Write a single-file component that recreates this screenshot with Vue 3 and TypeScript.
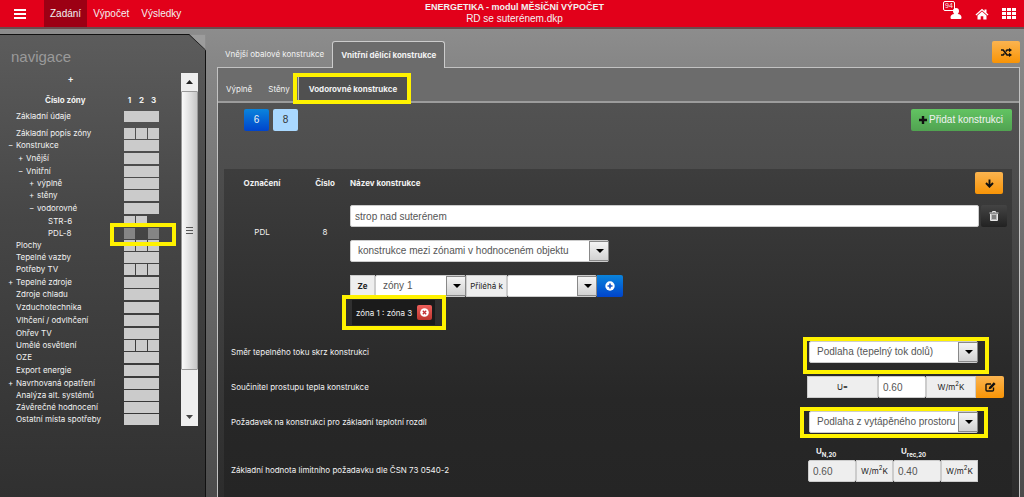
<script setup lang="ts">
import { ref } from 'vue'

interface NavRow {
  label: string
  level: number
  toggle?: string
  cells: string
  size?: string
}

// cells: "bar" is one bar across all zones; otherwise one letter per zone
// (o = filled, d = dimmed, - = none)
const rows: NavRow[] = [
  { label: 'Základní údaje', level: 0, cells: 'bar', size: 'apart' },
  { label: 'Základní popis zóny', level: 0, cells: 'ooo' },
  { label: 'Konstrukce', level: 0, toggle: '−', cells: 'bar', size: 'tall' },
  { label: 'Vnější', level: 1, toggle: '+', cells: 'bar', size: 'tall' },
  { label: 'Vnitřní', level: 1, toggle: '−', cells: 'bar' },
  { label: 'výplně', level: 2, toggle: '+', cells: 'bar' },
  { label: 'stěny', level: 2, toggle: '+', cells: 'bar', size: 'tall' },
  { label: 'vodorovné', level: 2, toggle: '−', cells: 'bar', size: 'tall' },
  { label: 'STR-6', level: 3, cells: 'oo-' },
  { label: 'PDL-8', level: 3, cells: 'd-d' },
  { label: 'Plochy', level: 0, cells: 'ooo' },
  { label: 'Tepelné vazby', level: 0, cells: 'bar' },
  { label: 'Potřeby TV', level: 0, cells: 'ooo', size: 'tall' },
  { label: 'Tepelné zdroje', level: 0, toggle: '+', cells: 'bar' },
  { label: 'Zdroje chladu', level: 0, cells: 'bar', size: 'tall' },
  { label: 'Vzduchotechnika', level: 0, cells: 'bar', size: 'tall' },
  { label: 'Vlhčení / odvlhčení', level: 0, cells: 'bar', size: 'tall' },
  { label: 'Ohřev TV', level: 0, cells: 'bar' },
  { label: 'Umělé osvětlení', level: 0, cells: 'ooo' },
  { label: 'OZE', level: 0, cells: 'bar', size: 'tall' },
  { label: 'Export energie', level: 0, cells: 'bar', size: 'tall' },
  { label: 'Navrhovaná opatření', level: 0, toggle: '+', cells: 'bar' },
  { label: 'Analýza alt. systémů', level: 0, cells: 'bar' },
  { label: 'Závěrečné hodnocení', level: 0, cells: 'bar' },
  { label: 'Ostatní místa spotřeby', level: 0, cells: 'bar' },
]

const name = ref('strop nad suterénem')
const uValue = ref('0.60')
</script>

<template>
  <div class="app">
    <header class="topbar">
      <button class="burger" type="button" aria-label="Menu"><i></i><i></i><i></i></button>
      <nav class="mainmenu">
        <a href="#" class="on">Zadání</a>
        <a href="#">Výpočet</a>
        <a href="#">Výsledky</a>
      </nav>
      <div class="title">
        <strong>ENERGETIKA - modul MĚSÍČNÍ VÝPOČET</strong>
        <span>RD se suterénem.dkp</span>
      </div>
      <div class="tools">
        <button type="button" class="user" aria-label="Uživatel">
          <svg width="12" height="11" viewBox="0 0 12 11"><path d="M6 0a3 3 0 0 1 3 3c0 1.300-.6 2.400-1.300 3C10 6.300 11.500 7.300 11.500 9.500c0 1-.6 1.500-1.500 1.500H2C1 11 .5 10.500.5 9.500.5 7.300 2 6.300 4.300 6 3.600 5.400 3 4.300 3 3a3 3 0 0 1 3-3z" fill="#fff" /></svg>
          <span class="count">94</span>
        </button>
        <button type="button" aria-label="Domů">
          <svg width="14" height="12" viewBox="0 0 14 12"><path d="M7 .8 9.500 3V1.500h2v3.200L13.500 6.500l-.8.900L7 2.500 1.300 7.400.5 6.500z" fill="#fff" /><path d="M7 3.600 11.500 7.500V11.500H8.300V8.300H5.700v3.200H2.500v-4z" fill="#fff" /></svg>
        </button>
        <button type="button" aria-label="Aplikace">
          <svg width="14" height="11" viewBox="0 0 14 11" fill="#fff"><path d="M0 0h4v3H0zM5 0h4v3H5zM10 0h4v3h-4zM0 4h4v3H0zM5 4h4v3H5zM10 4h4v3h-4zM0 8h4v3H0zM5 8h4v3H5zM10 8h4v3h-4z" /></svg>
        </button>
      </div>
    </header>

    <div class="body">
      <aside class="side">
        <svg class="fold" width="17" height="17" viewBox="0 0 17 17"><path d="M0 0h17v17z" fill="#8e8e8e" /><path d="M2 1l14 14V1z" fill="#9c9c9c" /><path d="M0 0.500 16.500 16V17" fill="none" stroke="#222" /></svg>
        <h2>navigace</h2>
        <div class="sidebody">
          <div class="tree">
            <button type="button" class="expand">+</button>
            <div class="treehead">
              <strong class="zone">Číslo zóny</strong>
              <span class="nums"><b>1</b><b>2</b><b>3</b></span>
            </div>
            <div v-for="r in rows" :key="r.label" class="row" :class="[r.size, 'lv' + r.level]">
              <span class="tog">{{ r.toggle }}</span>
              <a href="#" class="lab">{{ r.label }}</a>
              <span class="cells">
                <i v-if="r.cells === 'bar'" class="wide"></i>
                <template v-else>
                  <i v-for="(c, n) in r.cells.split('')" :key="n" :class="{ dim: c === 'd', none: c === '-' }"></i>
                </template>
                <span v-if="r.label === 'PDL-8'" class="mark"></span>
              </span>
            </div>
          </div>
          <div class="scroll">
            <button type="button" aria-label="Nahoru"><svg width="7" height="4" viewBox="0 0 7 4"><path d="M0 4 3.500 0 7 4z" fill="#222" /></svg></button>
            <div class="thumb"><i></i><i></i><i></i></div>
            <button type="button" class="down" aria-label="Dolů"><svg width="7" height="4" viewBox="0 0 7 4"><path d="M0 0h7L3.500 4z" fill="#444" /></svg></button>
          </div>
        </div>
      </aside>

      <main class="main">
        <div class="tabs">
          <a href="#">Vnější obalové konstrukce</a>
          <a href="#" class="on">Vnitřní dělící konstrukce</a>
          <button type="button" class="btn orange shuffle" aria-label="Zamíchat">
            <svg width="11" height="9" viewBox="0 0 11 9"><path d="M0 2h2.200L6 7h2.500M0 7h2.200L3.400 5.500M4.800 3.500 6 2h2.500" fill="none" stroke="#111" stroke-width="1.500" /><path d="M8 0l3 2-3 2.200zM8 4.800l3 2.200-3 2z" fill="#111" /></svg>
          </button>
        </div>
        <section class="panel">
          <div class="subtabs">
            <a href="#">Výplně</a>
            <a href="#">Stěny</a>
            <a href="#" class="on">Vodorovné konstrukce<span class="mark"></span></a>
          </div>
          <div class="inner">
            <div class="bar">
              <button type="button" class="btn blue num">6</button>
              <button type="button" class="btn pale num">8</button>
              <button type="button" class="btn green add">
                <svg width="8" height="8" viewBox="0 0 8 8"><path d="M2.800 0h2.400v2.800H8v2.400H5.200V8H2.800V5.200H0V2.800h2.800z" fill="#111" /></svg>
                Přidat konstrukci
              </button>
            </div>

            <div class="card">
              <div class="entry">
                <strong class="mid">Označení</strong>
                <strong class="mid">Číslo</strong>
                <div class="headrow">
                  <label for="name"><strong>Název konstrukce</strong></label>
                  <button type="button" class="btn orange" aria-label="Dolů">
                    <svg width="9" height="9" viewBox="0 0 9 9"><path d="M4.500.5V7M1 4l3.500 3.700L8 4" fill="none" stroke="#111" stroke-width="1.900" /></svg>
                  </button>
                </div>
                <span class="mid code">PDL</span>
                <span class="mid code">8</span>
                <div class="fields">
                  <div class="namerow">
                    <input id="name" v-model="name" type="text" class="box" />
                    <button type="button" class="btn dark" aria-label="Smazat">
                      <svg width="10" height="10" viewBox="0 0 10 10"><path d="M3.500 1.500V.500h3v1M.5 2h9M1.500 3v6.500h7V3" fill="none" stroke="#e8e8e8" /><path d="M2 3h6v6H2z" fill="#bbb" /><path d="M3 5h4M3 7h4" stroke="#444" /></svg>
                    </button>
                  </div>
                  <span class="sel kind">
                    <select aria-label="Druh konstrukce"><option>konstrukce mezi zónami v hodnoceném objektu</option></select>
                  </span>
                  <div class="zones">
                    <label for="from" class="addon bold">Ze</label>
                    <span class="sel from"><select id="from"><option>zóny 1</option></select></span>
                    <label for="to" class="addon adj">Přiléhá k</label>
                    <span class="sel to"><select id="to"><option></option></select></span>
                    <button type="button" class="btn blue go" aria-label="Přidat">
                      <svg width="10" height="10" viewBox="0 0 10 10"><circle cx="5" cy="5" r="4.700" fill="#fff" /><path d="M5 2.500v5M2.500 5h5" stroke="#1355c8" stroke-width="1.600" /></svg>
                    </button>
                  </div>
                  <div class="chip">
                    <span>zóna 1 : zóna 3</span>
                    <button type="button" class="btn red" aria-label="Odebrat">
                      <svg width="9" height="9" viewBox="0 0 9 9"><circle cx="4.500" cy="4.500" r="4.300" fill="#fff" /><path d="M2.800 2.800l3.400 3.400M6.200 2.800 2.800 6.200" stroke="#c32f34" stroke-width="1.300" /></svg>
                    </button>
                    <span class="mark"></span>
                  </div>
                </div>
              </div>

              <div class="line">
                <label for="dir">Směr tepelného toku skrz konstrukci</label>
                <span class="sel val"><select id="dir"><option>Podlaha (tepelný tok dolů)</option></select><span class="mark m1"></span></span>
              </div>
              <div class="line">
                <label for="u">Součinitel prostupu tepla konstrukce</label>
                <div class="group">
                  <span class="addon ueq">U=</span>
                  <input id="u" v-model="uValue" type="text" class="box" />
                  <span class="addon unit">W/m<sup>2</sup>K</span>
                  <button type="button" class="btn orange edit" aria-label="Upravit">
                    <svg width="11" height="10" viewBox="0 0 11 10"><path d="M8.500 5.500V8a1 1 0 0 1-1 1H2a1 1 0 0 1-1-1V3a1 1 0 0 1 1-1h4" fill="none" stroke="#111" stroke-width="1.400" /><path d="M8.800.3l1.800 1.800L6 6.700l-2.400.6.600-2.400z" fill="#111" /></svg>
                  </button>
                </div>
              </div>
              <div class="line">
                <label for="req">Požadavek na konstrukci pro základní teplotní rozdíl</label>
                <span class="sel val"><select id="req"><option>Podlaha z vytápěného prostoru</option></select><span class="mark m2"></span></span>
              </div>
              <div class="line last">
                <span>Základní hodnota limitního požadavku dle ČSN 73 0540-2</span>
                <div class="limits">
                  <div>
                    <label for="un"><b>U<sub>N,20</sub></b></label>
                    <div class="pair"><input id="un" type="text" class="box" value="0.60" readonly /><span class="addon">W/m<sup>2</sup>K</span></div>
                  </div>
                  <div>
                    <label for="ur"><b>U<sub>rec,20</sub></b></label>
                    <div class="pair"><input id="ur" type="text" class="box" value="0.40" readonly /><span class="addon">W/m<sup>2</sup>K</span></div>
                  </div>
                </div>
              </div>
            </div>
          </div>
        </section>
      </main>
    </div>
  </div>
</template>

<style>
body {
  margin: 0;
  background: #4a4a4a;
}
</style>

<style scoped>
.app,
.app * {
  box-sizing: border-box;
}
.app {
  display: flex;
  flex-direction: column;
  min-height: 100vh;
  font: 8px/12px Inter, "Liberation Sans", Arial, sans-serif;
  color: #f2f2f2;
  background: linear-gradient(#929292, #878787 12%, #4b4b4b);
}
a {
  color: inherit;
  text-decoration: none;
}
button,
input,
select {
  margin: 0;
  font: 10px/12px "Liberation Sans", Arial, sans-serif;
}
button {
  display: flex;
  align-items: center;
  justify-content: center;
  padding: 0;
  border: 0;
  background: none;
  color: inherit;
  cursor: pointer;
}
svg {
  display: block;
}

.topbar {
  display: grid;
  grid-template-columns: 1fr auto 1fr;
  height: 29px;
  background: #e2001a;
  border-bottom: 2px solid #6b4c4e;
  font: 10px/12px "Liberation Sans", Arial, sans-serif;
}
.burger {
  grid-column: 1;
  grid-row: 1;
  justify-self: start;
  flex-direction: column;
  gap: 2px;
  width: 40px;
}
.burger i {
  width: 12px;
  height: 2px;
  background: #fff;
}
.mainmenu {
  grid-column: 1;
  grid-row: 1;
  display: flex;
  margin-left: 44px;
}
.mainmenu a {
  display: flex;
  align-items: center;
  padding: 0 6px;
}
.mainmenu .on {
  background: #9c0014;
}
.title {
  grid-column: 2;
  grid-row: 1;
  display: flex;
  flex-direction: column;
  align-items: center;
  padding: 1px 0 0 5px;
}
.title strong {
  font-size: 9px;
}
.tools {
  grid-column: 3;
  grid-row: 1;
  display: flex;
  justify-content: flex-end;
  gap: 13px;
  padding-right: 8px;
}
.user {
  position: relative;
}
.count {
  position: absolute;
  left: -7px;
  top: 1px;
  width: 12px;
  height: 10px;
  border: 1px solid #fff;
  border-radius: 2px;
  font-size: 7px;
  line-height: 8px;
}

.body {
  display: flex;
  flex: 1;
  padding-top: 5px;
}
.side {
  position: relative;
  width: 206px;
  flex: none;
  border-top: 1px solid #111;
  border-right: 1px solid #111;
  background: linear-gradient(#5c5c5c, #464646 40%, #303030);
}
.fold {
  position: absolute;
  right: -1px;
  top: -1px;
}
h2 {
  margin: 0;
  padding: 12px 0 0 11px;
  font: 15px/20px "Liberation Sans", Arial, sans-serif;
  color: #9a9a9a;
}
.sidebody {
  display: flex;
  padding: 6px 7px 0 6px;
}
.tree {
  flex: 1;
  padding-right: 22px;
}
.expand {
  height: 14px;
  margin-left: 62px;
  font-weight: 700;
  font-size: 9px;
}
.treehead {
  display: flex;
  justify-content: space-between;
  height: 24px;
  padding-top: 7px;
}
.zone {
  margin-left: 39px;
}
.nums,
.cells {
  display: flex;
  gap: 1px;
  width: 35px;
  flex: none;
}
.nums b {
  flex: 1;
  text-align: center;
}
.row {
  display: flex;
  height: 12px;
  white-space: nowrap;
}
.row.tall {
  height: 13px;
}
.row.apart {
  height: 17px;
}
.lv1 {
  padding-left: 10px;
}
.lv2 {
  padding-left: 21px;
}
.lv3 {
  padding-left: 32px;
}
.tog {
  width: 10px;
  padding-left: 2px;
  line-height: 11px;
}
.lab {
  flex: 1;
  line-height: 11px;
}
.cells {
  position: relative;
  height: 11px;
}
.cells i {
  flex: 1;
  background: #cbcbcb;
}
.cells .dim {
  background: #858585;
}
.cells .none {
  visibility: hidden;
}
.cells .mark {
  inset: -5px -17px -7px -14px;
}
.mark {
  position: absolute;
  border: 4px solid #fff200;
  pointer-events: none;
  z-index: 2;
}
.scroll {
  display: flex;
  flex-direction: column;
  width: 17px;
  background: #efefef;
}
.scroll button {
  height: 18px;
  flex: none;
}
.thumb {
  display: flex;
  flex-direction: column;
  align-items: center;
  justify-content: center;
  gap: 1px;
  height: 279px;
  border: 1px solid #999;
  border-radius: 1px;
  background: linear-gradient(90deg, #fafafa, #dcdcdc 60%, #c6c6c6);
}
.thumb i {
  width: 7px;
  height: 2px;
  border-top: 1px solid #555;
}
.down {
  margin-top: auto;
}

.main {
  display: flex;
  flex: 1;
  flex-direction: column;
  min-width: 0;
  padding: 7px 4px 0 11px;
}
.tabs {
  display: flex;
  height: 27px;
  margin-bottom: -1px;
  position: relative;
  z-index: 1;
}
.tabs a {
  padding: 7px 8px 0;
}
.tabs .on {
  border: 1px solid #ccc;
  border-bottom: 0;
  border-radius: 3px 3px 0 0;
  background: #6c6c6c;
  font-weight: 700;
}
.shuffle {
  margin-left: auto;
}
.panel {
  display: flex;
  flex: 1;
  flex-direction: column;
  border: 1px solid #c2c2c2;
  border-bottom: 0;
  background: #6c6c6c;
}
.subtabs {
  display: flex;
  height: 35px;
  padding-top: 9px;
  border-bottom: 2px solid #9c9c9c;
}
.subtabs a {
  padding: 6px 8px 0;
}
.subtabs .on {
  position: relative;
  padding: 6px 10px 0;
  margin-bottom: -2px;
  border-left: 1px solid #bbb;
  background: #505050;
  font-weight: 700;
}
.subtabs .mark {
  inset: -4px -4px -1px -6px;
}
.inner {
  display: flex;
  flex: 1;
  flex-direction: column;
  padding: 6px 7px 0 6px;
  background: linear-gradient(#525252, #4c4c4c 20%, #2c2c2c);
}
.bar {
  display: flex;
  gap: 4px;
  padding-left: 20px;
  margin-bottom: 38px;
}
.btn {
  height: 22px;
  width: 28px;
  flex: none;
  border-radius: 2px;
}
.orange {
  background: linear-gradient(#fbb450, #f89406);
}
.blue {
  background: linear-gradient(#0a84dc, #0044cc);
}
.pale {
  background: #a9d8ff;
  color: #333;
}
.green {
  background: linear-gradient(#62c462, #51a351);
}
.dark {
  background: linear-gradient(#444, #222);
}
.red {
  background: linear-gradient(#ee5f5b, #bd362f);
}
.num {
  width: 25px;
}
.add {
  width: auto;
  gap: 2px;
  margin-left: auto;
  padding: 0 9px 0 8px;
}
.card {
  flex: 1;
  padding: 3px 5px 12px 0;
  background: linear-gradient(#3d3d3d, #272727 70%, #252525);
}
.entry {
  display: grid;
  grid-template-columns: 76px 50px 1fr;
  row-gap: 11px;
}
.mid {
  text-align: center;
  padding-top: 5px;
}
.code {
  padding-top: 21px;
}
.headrow {
  display: flex;
  justify-content: space-between;
  align-items: center;
  padding-right: 4px;
}
.fields {
  display: flex;
  flex-direction: column;
  align-items: flex-start;
}
.namerow {
  display: flex;
  gap: 2px;
  width: 100%;
  margin-bottom: 13px;
}
.namerow .box {
  flex: 1;
}
.namerow .btn {
  width: 26px;
}
.box,
select {
  height: 22px;
  min-width: 0;
  padding: 0 4px;
  border: 1px solid #ccc;
  border-radius: 2px;
  background: #fff;
  color: #555;
}
.sel {
  position: relative;
  display: flex;
  height: 22px;
}
.sel select {
  width: 100%;
  padding: 0 18px 0 7px;
  appearance: none;
}
.sel::before {
  content: "";
  position: absolute;
  top: 1px;
  right: 0;
  bottom: 1px;
  width: 18px;
  border: 1px solid #888;
  background: linear-gradient(#f4f4f4, #d2d2d2);
  pointer-events: none;
}
.sel::after {
  content: "";
  position: absolute;
  top: 9px;
  right: 5px;
  border: 4px solid transparent;
  border-top-color: #000;
  border-bottom: 0;
  pointer-events: none;
}
.kind {
  width: 259px;
  margin-bottom: 13px;
}
.zones {
  display: flex;
  margin-bottom: 3px;
}
.addon {
  display: flex;
  align-items: center;
  justify-content: center;
  height: 22px;
  border: 1px solid #ccc;
  background: #eee;
  color: #222;
}
.bold {
  width: 25px;
  font-weight: 700;
}
.from {
  width: 91px;
}
.to {
  width: 90px;
}
.adj {
  width: 41px;
}
.go {
  width: 26px;
  border-radius: 0 2px 2px 0;
}
.chip {
  position: relative;
  display: flex;
  align-items: center;
  gap: 5px;
  height: 25px;
  margin-left: 2px;
  padding: 0 3px 0 4px;
  background: #1b1b1b;
}
.chip .btn {
  width: 15px;
  height: 15px;
}
.chip .mark {
  inset: -5px -11px -5px -10px;
}
.line {
  display: grid;
  grid-template-columns: 1fr 200px;
  align-items: center;
  height: 22px;
  margin: 0 0 13px 7px;
}
.entry + .line {
  margin-top: 16px;
}
.val {
  width: 169px;
  margin-left: 2px;
}
.m1 {
  inset: -4px -11px -11px -6px;
}
.m2 {
  inset: -4px -10px -5px -9px;
}
.group {
  display: flex;
}
.ueq {
  width: 71px;
}
.group .box {
  width: 48px;
}
.unit {
  width: 50px;
}
.edit {
  border-radius: 0 2px 2px 0;
}
sup,
sub {
  font-size: 6px;
  line-height: 0;
}
sup {
  margin-bottom: 6px;
}
.line.last {
  height: auto;
  align-items: end;
  margin-bottom: 0;
}
.last > span {
  padding-bottom: 6px;
}
.limits {
  display: flex;
  margin-left: 1px;
}
.limits > div {
  width: 85px;
}
.limits label {
  display: block;
  padding-left: 8px;
  margin-bottom: 4px;
  line-height: 10px;
}
.pair {
  display: flex;
}
.pair .box {
  width: 48px;
  background: #eee;
}
.pair .addon {
  flex: 1;
}
</style>
